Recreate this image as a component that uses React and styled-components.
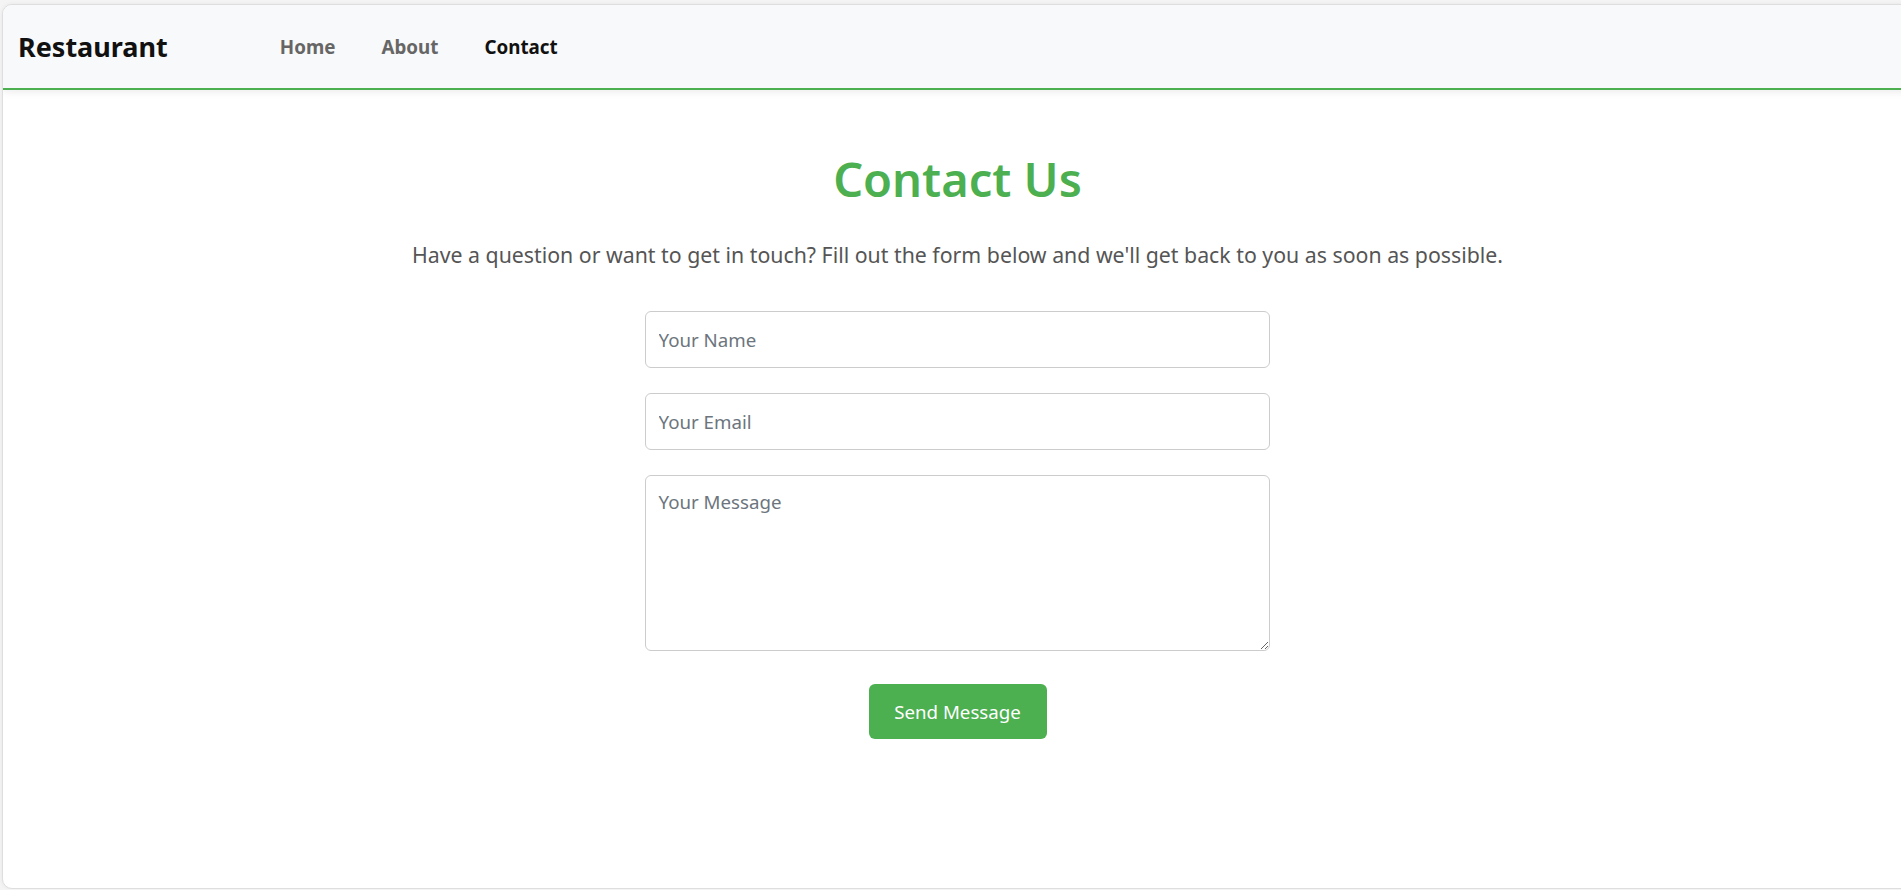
import React from "react";
import styled, { createGlobalStyle } from "styled-components";

const GlobalStyle = createGlobalStyle`
  html, body {
    margin: 0;
    padding: 0;
    background: #f4f4f4;
    overflow: hidden;
  }
  body {
    font-family: "Noto Sans", "Open Sans", sans-serif;
  }
  * {
    box-sizing: border-box;
  }
`;

const Frame = styled.div`
  margin: 4px 0 0 2px;
  width: calc(100% + 10px);
  height: 885px;
  border: 1px solid #dedede;
  border-radius: 10px;
  background: #fff;
  overflow: hidden;
  box-shadow: 0 0 4px rgba(0, 0, 0, 0.06);
`;

const Navbar = styled.nav`
  display: flex;
  align-items: center;
  height: 85px;
  padding: 0 15px;
  background: #f8f9fa;
  border-bottom: 2.5px solid #4caf50;
  box-shadow: 0 2px 8px rgba(0, 0, 0, 0.08);
`;

const Brand = styled.div`
  font-size: 27px;
  font-weight: 700;
  color: #111;
`;

const NavList = styled.ul`
  display: flex;
  gap: 46px;
  margin: 0 0 0 112px;
  padding: 0;
  list-style: none;
`;

const NavLink = styled.a`
  font-size: 18.8px;
  font-weight: 700;
  color: ${(p) => (p.$active ? "#111" : "#666")};
  text-decoration: none;
  cursor: pointer;
`;

const Main = styled.main`
  display: flex;
  flex-direction: column;
  align-items: center;
  padding-top: 61px;
`;

const Title = styled.h1`
  margin: 0;
  font-size: 47px;
  font-weight: 600;
  line-height: 56px;
  color: #4caf50;
`;

const Intro = styled.p`
  margin: 33px 0 41px;
  font-size: 21.3px;
  line-height: 30px;
  color: #555;
`;

const Form = styled.form`
  display: flex;
  flex-direction: column;
  align-items: center;
  gap: 25px;
  width: 625px;
`;

const Field = styled.input`
  width: 100%;
  height: 57px;
  padding: 0 12.5px;
  border: 1px solid #ccc;
  border-radius: 6px;
  font-family: inherit;
  font-size: 18.7px;
  color: #333;
  outline: none;

  &::placeholder {
    color: #6c757d;
  }
`;

const MessageBox = styled.textarea`
  width: 100%;
  height: 176px;
  padding: 13px 12.5px;
  border: 1px solid #ccc;
  border-radius: 6px;
  font-family: inherit;
  font-size: 18.7px;
  color: #333;
  resize: vertical;
  outline: none;

  &::placeholder {
    color: #6c757d;
  }
`;

const SendButton = styled.button`
  margin-top: 8px;
  width: 178px;
  height: 55px;
  border: none;
  border-radius: 6px;
  background: #4caf50;
  color: #fff;
  font-family: inherit;
  font-size: 18.7px;
  cursor: pointer;
`;

const App = () => {
  return (
    <>
      <GlobalStyle />
      <Frame>
        <Navbar>
          <Brand>Restaurant</Brand>
          <NavList>
            <li>
              <NavLink>Home</NavLink>
            </li>
            <li>
              <NavLink>About</NavLink>
            </li>
            <li>
              <NavLink $active>Contact</NavLink>
            </li>
          </NavList>
        </Navbar>
        <Main>
          <Title>Contact Us</Title>
          <Intro>
            Have a question or want to get in touch? Fill out the form below and
            we'll get back to you as soon as possible.
          </Intro>
          <Form onSubmit={(e) => e.preventDefault()}>
            <Field type="text" placeholder="Your Name" />
            <Field type="email" placeholder="Your Email" />
            <MessageBox placeholder="Your Message" />
            <SendButton type="submit">Send Message</SendButton>
          </Form>
        </Main>
      </Frame>
    </>
  );
};

export default App;
